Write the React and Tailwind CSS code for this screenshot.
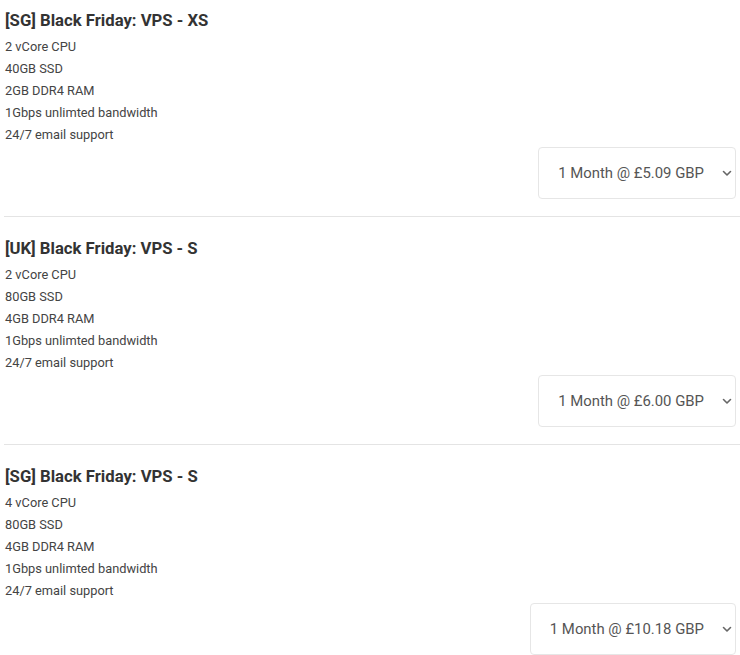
const plans = [
  { title: '[SG] Black Friday: VPS - XS', specs: ['2 vCore CPU', '40GB SSD', '2GB DDR4 RAM', '1Gbps unlimted bandwidth', '24/7 email support'], price: '1 Month @ £5.09 GBP' },
  { title: '[UK] Black Friday: VPS - S', specs: ['2 vCore CPU', '80GB SSD', '4GB DDR4 RAM', '1Gbps unlimted bandwidth', '24/7 email support'], price: '1 Month @ £6.00 GBP' },
  { title: '[SG] Black Friday: VPS - S', specs: ['4 vCore CPU', '80GB SSD', '4GB DDR4 RAM', '1Gbps unlimted bandwidth', '24/7 email support'], price: '1 Month @ £10.18 GBP' },
]

function Chevron() {
  return (
    <svg width="12" height="12" viewBox="0 0 12 12" fill="none" stroke="#666" strokeWidth="1.6" strokeLinecap="round" strokeLinejoin="round">
      <polyline points="2.5,4.5 6,8 9.5,4.5" />
    </svg>
  )
}

export default function App() {
  return (
    <div className="w-[740px] h-[655px] overflow-hidden bg-white pl-[4px]" style={{ fontFamily: 'Roboto, "Liberation Sans", sans-serif' }}>
      {plans.map((p, i) => (
        <div key={i} className={`${i === 0 ? 'pt-[9px]' : 'pt-[20px]'} ${i < plans.length - 1 ? 'border-b border-[#e4e4e4] pb-[17px]' : ''}`}>
          <div className="pl-[1px] pr-[4px]">
            <h3 className="text-[16.7px] leading-[24px] font-bold text-[#333]">{p.title}</h3>
            <ul className="mt-[3px]">
              {p.specs.map((s, j) => (
                <li key={j} className="text-[12.8px] leading-[22px] text-[#444]">{s}</li>
              ))}
            </ul>
            <div className="mt-[1px] flex justify-end">
              <div className="h-[52px] inline-flex items-center pl-[19px] pr-[2px] border border-[#e6e6e6] rounded-[4px] bg-white">
                <span className="text-[14.9px] text-[#555]">{p.price}</span>
                <span className="ml-[17px]"><Chevron /></span>
              </div>
            </div>
          </div>
        </div>
      ))}
    </div>
  )
}
